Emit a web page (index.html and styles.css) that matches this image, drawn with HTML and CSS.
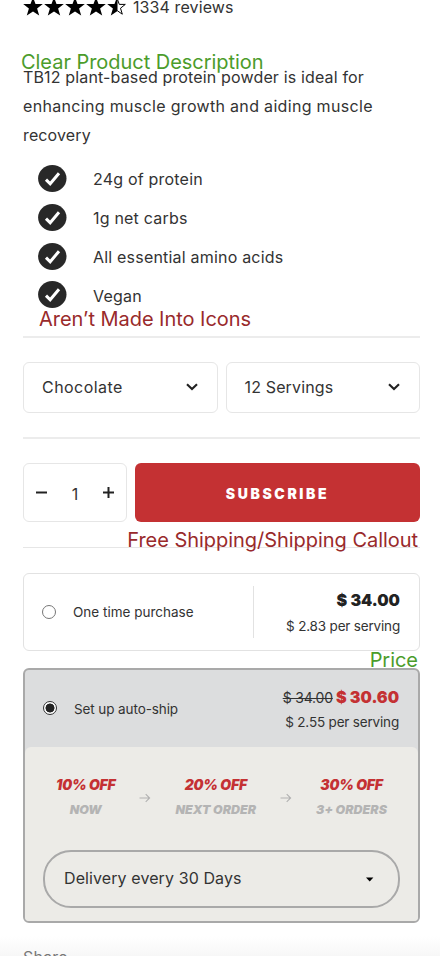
FILE: index.html
```html
<!DOCTYPE html>
<html lang="en">
<head>
<meta charset="utf-8">
<title>Product</title>
<link rel="stylesheet" href="styles.css">
</head>
<body>
<svg class="defs" aria-hidden="true">
  <symbol id="star" viewBox="0 0 20 20"><path d="M10 .3l2.5 6.6h7.3l-5.7 4.5 2.1 7.2L10 14.4l-6.2 4.2 2.1-7.2L.2 6.9h7.3z"/></symbol>
  <symbol id="half" viewBox="0 0 20 20"><path d="M10.5 .3v13.8L3.8 18.6l2.1-7.2L.2 6.9h7.3L10 .3z"/><path d="M10.3 2l2 5.4h6l-4.8 3.8 1.8 6-5-3.5" fill="none" stroke="#000" stroke-width="1"/></symbol>
  <symbol id="check" viewBox="0 0 29 27"><ellipse cx="14.3" cy="13.5" rx="14.2" ry="13.4" fill="#282828"/><path d="M8 14.6l4.2 4.2L21 8.2" fill="none" stroke="#fff" stroke-width="3"/></symbol>
  <symbol id="chevron" viewBox="0 0 12 8"><path d="M1 1.3l5 4.8 5-4.8" fill="none" stroke="#222" stroke-width="2.1"/></symbol>
  <symbol id="arrow" viewBox="0 0 12 10"><path d="M.5 5h10M6.7 1.2L10.6 5 6.7 8.8" fill="none" stroke="#b2b2b2" stroke-width="1.1"/></symbol>
</svg>
<main class="page">
  <div class="reviews">
    <div class="stars"><svg><use href="#star"/></svg><svg><use href="#star"/></svg><svg><use href="#star"/></svg><svg><use href="#star"/></svg><svg><use href="#half"/></svg></div>
    <span class="count">1334 reviews</span>
  </div>
  <section class="description">
    <span class="note good note-description">Clear Product Description</span>
    <p><span class="d1">TB12 plant-based protein powder is ideal for</span><br><span class="d2">enhancing muscle growth and aiding muscle</span><br>recovery</p>
  </section>
  <section class="benefits">
    <ul>
      <li><svg><use href="#check"/></svg><span>24g of protein</span></li>
      <li><svg><use href="#check"/></svg><span>1g net carbs</span></li>
      <li><svg><use href="#check"/></svg><span>All essential amino acids</span></li>
      <li><svg><use href="#check"/></svg><span class="last">Vegan</span></li>
    </ul>
    <span class="note bad note-icons">Aren’t Made Into Icons</span>
  </section>
  <section class="options">
    <div class="select"><span class="flavor">Chocolate</span><svg><use href="#chevron"/></svg></div>
    <div class="select"><span>12 Servings</span><svg><use href="#chevron"/></svg></div>
  </section>
  <section class="buy">
    <div class="quantity">
      <svg viewBox="0 0 11 11"><path d="M0 5.5h11" stroke="#222" stroke-width="2"/></svg>
      <span>1</span>
      <svg viewBox="0 0 11 11"><path d="M0 5.5h11M5.5 0v11" stroke="#222" stroke-width="2"/></svg>
    </div>
    <div class="subscribe">SUBSCRIBE</div>
    <span class="note bad note-shipping">Free Shipping/Shipping Callout</span>
  </section>
  <section class="once">
    <span class="radio"></span>
    <span class="label">One time purchase</span>
    <div class="cost"><div class="price">$ 34.00</div><div class="per">$ 2.83 per serving</div></div>
    <span class="note good note-price">Price</span>
  </section>
  <section class="auto">
    <div class="auto-head">
      <span class="radio checked"></span>
      <span class="label ship">Set up auto-ship</span>
      <div class="cost"><div class="price sale"><s>$ 34.00</s> $ 30.60</div><div class="per">$ 2.55 per serving</div></div>
    </div>
    <div class="auto-body">
      <div class="steps">
        <div class="step"><b>10% OFF</b><i>NOW</i></div>
        <svg><use href="#arrow"/></svg>
        <div class="step"><b>20% OFF</b><i>NEXT ORDER</i></div>
        <svg><use href="#arrow"/></svg>
        <div class="step"><b>30% OFF</b><i>3+ ORDERS</i></div>
      </div>
      <div class="delivery"><span>Delivery every 30 Days</span><svg viewBox="0 0 8 5"><path d="M0 .5h7.4L3.7 4.5z"/></svg></div>
    </div>
  </section>
  <footer><span>Share</span></footer>
</main>
</body>
</html>
```
FILE: styles.css
```css
* { box-sizing: border-box; }
body { margin: 0; background: #fff; color: #333; font-family: Inter, "Liberation Sans", sans-serif; font-size: 16px; }
.defs { position: absolute; width: 0; height: 0; }
.page { width: 440px; height: 956px; overflow: hidden; padding: 0 20px 0 23px; }
svg { display: block; flex: none; }
span, .price, .per { white-space: nowrap; }

.note { position: absolute; font-size: 20px; line-height: 24px; letter-spacing: -.04px; z-index: 1; }
.good { color: #4b9c2b; }
.bad { color: #992a2b; }
.note-description { left: -2px; top: -13px; }
.note-icons { left: 16px; top: 144px; }
.note-shipping { right: 2px; top: 89px; }
.note-price { right: 1px; top: 74px; }

.reviews { height: 63px; display: flex; }
.stars { display: flex; gap: 1px; margin-top: -3px; }
.stars svg { width: 20px; height: 20px; }
.count { line-height: 20px; margin: -3px 0 0 6px; letter-spacing: .1px; }

.description { position: relative; height: 100px; }
.description p { margin: 0; line-height: 29px; letter-spacing: .12px; }
.d1 { letter-spacing: .15px; }
.d2 { letter-spacing: .32px; }

.benefits { position: relative; height: 175px; border-bottom: 2px solid #ececec; }
ul { margin: 0; padding: 2px 0 0 15px; list-style: none; }
li { display: flex; height: 38.8px; gap: 26px; }
li svg { width: 29px; height: 27px; }
li span { line-height: 29px; letter-spacing: .2px; }
li .last { line-height: 31px; }

.options { height: 101px; border-bottom: 2px solid #ececec; padding-top: 24px; display: flex; gap: 8px; }
.select { flex: 1; height: 51px; border: 1.5px solid #e6e6e6; border-radius: 6px; display: flex; align-items: center; justify-content: space-between; padding: 0 19px 0 18px; letter-spacing: .15px; }
.select span { margin-top: -2px; }
.select .flavor { letter-spacing: .45px; }
.select svg { width: 12px; height: 8px; margin-top: -1px; }

.buy { position: relative; height: 109px; border-bottom: 1px solid #e6e6e6; padding-top: 24px; display: flex; gap: 8px; }
.quantity { width: 104px; height: 59px; border: 1.5px solid #e6e6e6; border-radius: 6px; display: flex; align-items: center; justify-content: space-between; padding: 0 12px; }
.quantity svg { width: 11px; height: 11px; }
.quantity span { padding-top: 2px; }
.subscribe { flex: 1; height: 59px; border-radius: 6px; background: #c43133; color: #fff; font-size: 14px; font-weight: 900; letter-spacing: 2.6px; line-height: 62px; text-align: center; }

.once { position: relative; margin-top: 25px; height: 78px; border: 1px solid #e2e2e2; border-radius: 6px; display: flex; align-items: center; padding: 0 19px 0 18px; }
.radio { width: 14px; height: 14px; border: 1px solid #777; border-radius: 50%; background: #fff; margin: -1px 17px 0 0; }
.checked { border-color: #333; background: radial-gradient(circle, #222 0 4.2px, #fff 4.8px); }
.label { font-size: 13.5px; flex: 1; }
.ship { letter-spacing: -.1px; }
.cost { width: 147px; height: 52px; border-left: 1px solid #e2e2e2; text-align: right; }
.price { font-size: 16px; font-weight: 900; line-height: 20px; margin-top: 4px; color: #222; }
.per { font-size: 13.5px; line-height: 18px; margin-top: 7px; letter-spacing: -.18px; }
.sale { color: #c43133; }
.sale s { font-size: 14px; font-weight: 400; letter-spacing: -.2px; color: #333; }

.auto { margin-top: 17px; height: 255px; border: 2px solid #a9a9a9; border-radius: 6px; background: #dcddde; overflow: hidden; }
.auto-head { height: 77px; display: flex; align-items: center; padding: 0 19px 0 18px; }
.auto-head .cost { border-color: transparent; }
.auto-head .per { margin-top: 5px; }
.auto-body { height: 174px; background: #ecebe7; border-radius: 6px 6px 0 0; padding: 28px 18px 0; }
.steps { height: 75px; display: flex; justify-content: space-between; padding: 0 13px 0 13px; }
.steps svg { width: 12px; height: 10px; margin-top: 18px; }
.step { text-align: center; font-style: italic; font-weight: 900; white-space: nowrap; }
.step b { display: block; font-size: 14px; line-height: 20px; font-weight: 900; letter-spacing: -.2px; color: #c43133; }
.step i { display: block; font-size: 12.4px; line-height: 16px; margin-top: 7px; letter-spacing: .05px; color: #b4b4b4; }
.delivery { height: 58px; border: 2px solid #a9a9a9; border-radius: 28px; display: flex; align-items: center; justify-content: space-between; padding: 0 24px 0 19px; letter-spacing: .1px; }
.delivery span { margin-top: -2px; }
.delivery svg { width: 8px; height: 5px; }

footer { height: 33px; margin: 0 -20px 0 -23px; padding: 24px 23px 0; background: linear-gradient(#fff 40%, #f7f7f7); color: #777; line-height: 20px; letter-spacing: .2px; }
```
